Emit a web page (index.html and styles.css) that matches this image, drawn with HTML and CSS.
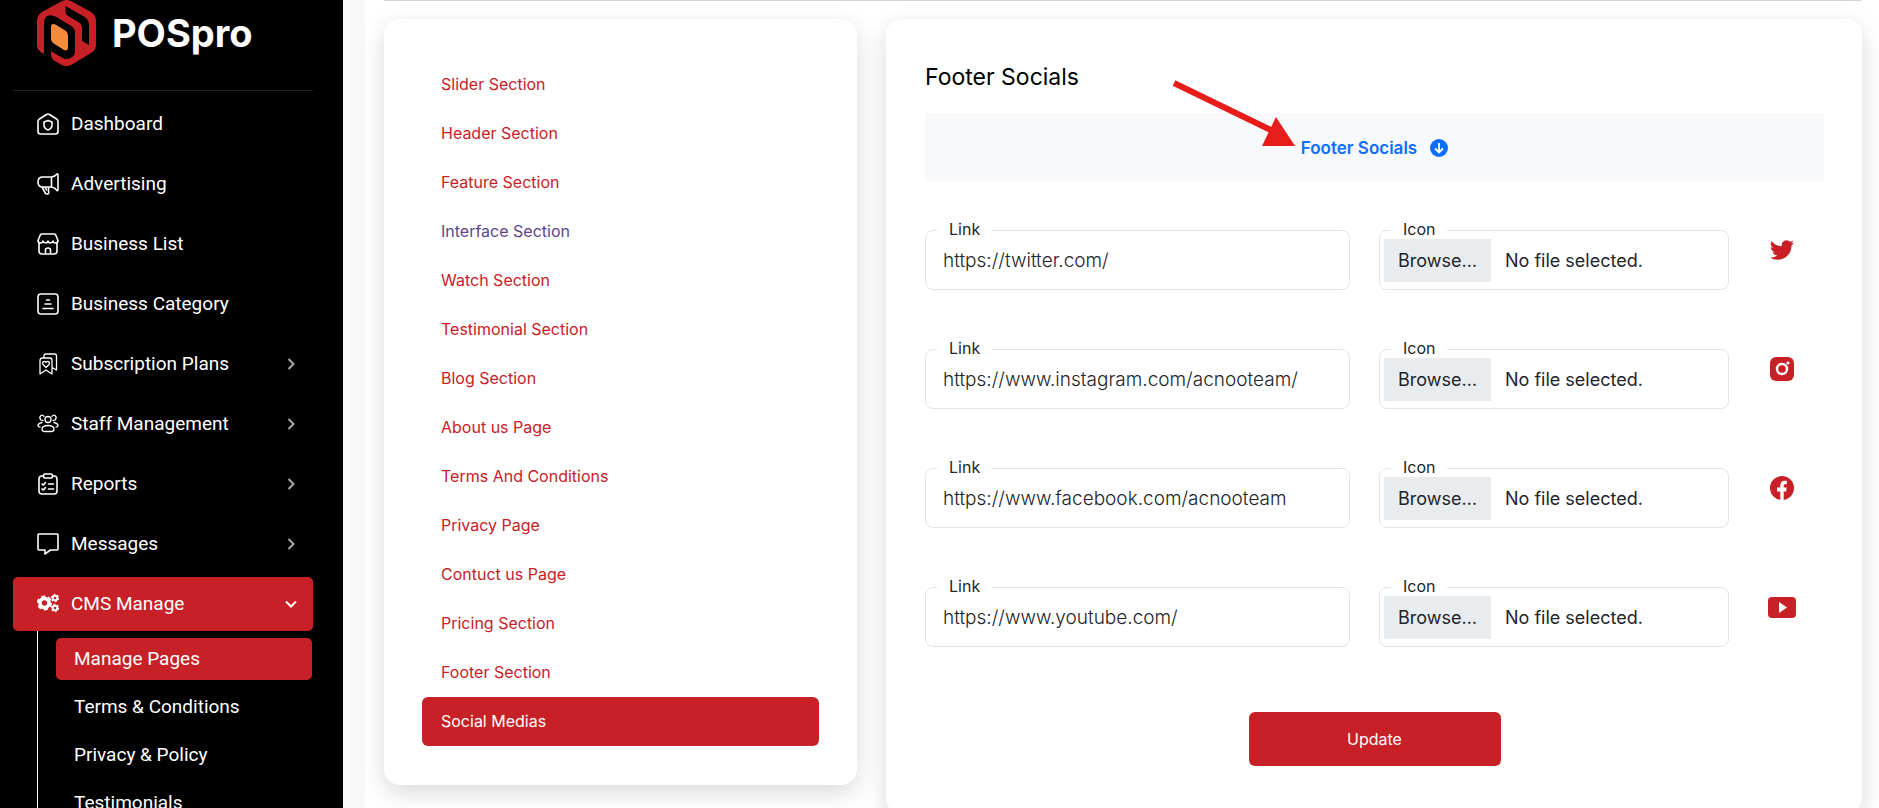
FILE: index.html
```html
<!DOCTYPE html>
<html lang="en">
<head>
<meta charset="utf-8">
<title>POSpro - Manage Pages</title>
<link rel="stylesheet" href="styles.css">
</head>
<body>
<div class="app">
  <aside class="sidebar">
    <a class="brand" href="#">
      <svg class="brand-mark" viewBox="0 0 59 66" aria-hidden="true">
        <path fill="#c72127" d="M25 1Q29.500-1 34 1L54 12Q59 15 59 21V45Q59 50 54 53L35 64.500Q29.500 67.500 24 64.500L17 60.500Q14 58 14 55V51L25 57.500Q30 60.500 35 57Q38 55 38 50V33Q38 28.500 34 26L19 17Q14.500 14.500 10.500 16Q7 18 7 24V54Q0 51 0 45V21Q0 15 5 12Z"/>
        <path fill="#000" d="M7 54V24Q7 18 10.500 16Q14.500 14.500 19 17L34 26Q38 28.500 38 33V50Q38 55 35 57Q30 60.500 25 57.500L14 51V56Z"/>
        <path fill="#000" d="M28.500 6L47 16.500Q52 19.500 52 25V45L45 41V28Q45 24 41.500 22L32 16.500Q28.500 14.500 28.500 11Z"/>
        <path fill="#f68b3c" d="M14 27Q14 22.500 18.500 24.500L29 31Q31 33 31 35.500V47Q31 51.500 27 50L16 43Q14 41.500 14 39Z"/>
      </svg>
      <span class="brand-name">POSpro</span>
    </a>
    <nav class="menu">
      <a class="menu-item" href="#">
        <svg class="menu-icon" viewBox="0 0 22 22"><path d="M1 8.500Q1 7 2.500 6L9.500 1.500Q11 .500 12.500 1.500L19.500 6Q21 7 21 8.500V18.500Q21 21 18.500 21H3.500Q1 21 1 18.500Z"/><path d="M11 7.500L15 9V12Q15 15.500 11 17Q7 15.500 7 12V9Z"/></svg>
        <span class="menu-text">Dashboard</span></a>
      <a class="menu-item" href="#">
        <svg class="menu-icon" viewBox="0 0 22 22"><path d="M14.500 4H5Q1 4.500 1 9T5 14H14.500ZM14.500 4Q18 3.500 20 1Q21 .500 21 2V16.500Q21 18 20 17.500Q18 14.500 14.500 14M5 14L8.500 20.500Q9.500 21.500 11.500 20.500Q12 20 11.500 18.500V14M8 14L9.500 17"/></svg>
        <span class="menu-text">Advertising</span></a>
      <a class="menu-item" href="#">
        <svg class="menu-icon" viewBox="0 0 22 22"><path d="M2 10V18Q2 21 5 21H17Q20 21 20 18V10M3.500 1.500Q4 1 5 1H17Q18 1 18.500 1.500L21 7.500Q21 10 18.500 10Q16 10 16 8Q15 10 13.500 10Q11.500 10 11 8Q10.500 10 8.500 10Q7 10 6 8Q6 10 3.500 10Q1 10 1 7.500ZM8.500 21V17Q8.500 15 11 15T13.500 17V21"/></svg>
        <span class="menu-text">Business List</span></a>
      <a class="menu-item" href="#">
        <svg class="menu-icon" viewBox="0 0 22 22"><rect x="1" y="1" width="20" height="20" rx="3"/><path d="M9.500 7H12.500M8 11H14M6 15.500H16"/></svg>
        <span class="menu-text">Business Category</span></a>
      <a class="menu-item" href="#">
        <svg class="menu-icon thin" viewBox="0 0 22 22"><path d="M3 21V8Q3 5 5.500 5H13Q15 5 15 7.500V21L9 17ZM7 5V3Q7 1 9 1H17.500Q19.500 1 19.500 3V17L15 14.500M9 14.500L6 11.500Q5 9.500 6.500 8.500Q8 8 9 9.500Q10 8 11.500 8.500Q13 9.500 12 11.500Z"/></svg>
        <span class="menu-text">Subscription Plans</span>
        <svg class="chevron" viewBox="0 0 12 12"><path d="M3.500 1L8.500 6L3.500 11"/></svg></a>
      <a class="menu-item" href="#">
        <svg class="menu-icon thin" viewBox="0 0 22 22"><circle cx="11" cy="6.500" r="3"/><path d="M8 18.500Q5 18.500 5 16.500Q5 12.500 11 12.500T17 16.500Q17 18.500 14 18.500ZM7 3.500Q6 1.500 4 2.500Q2 4 3.500 6.500Q4 7.500 6 7.500M15 3.500Q16 1.500 18 2.500Q20 4 18.500 6.500Q18 7.500 16 7.500M5 9.500Q1 10.500 1 12.500Q1 14 3 14M17 9.500Q21 10.500 21 12.500Q21 14 19 14"/></svg>
        <span class="menu-text">Staff Management</span>
        <svg class="chevron" viewBox="0 0 12 12"><path d="M3.500 1L8.500 6L3.500 11"/></svg></a>
      <a class="menu-item" href="#">
        <svg class="menu-icon" viewBox="0 0 22 22"><path d="M6 3H5Q2 3 2 6V18Q2 21 5 21H17Q20 21 20 18V6Q20 3 17 3H16"/><rect x="6.500" y="1" width="9" height="4" rx="1.500"/><path d="M5 11L6.500 12L8.500 9.500M5 16L6.500 17L8.500 14.500M11.500 11H16.500M11.500 16H16.500"/></svg>
        <span class="menu-text">Reports</span>
        <svg class="chevron" viewBox="0 0 12 12"><path d="M3.500 1L8.500 6L3.500 11"/></svg></a>
      <a class="menu-item" href="#">
        <svg class="menu-icon" viewBox="0 0 22 22"><path d="M2 1H20Q21 1 21 2V16Q21 17 20 17H13.500L8 21V17H2Q1 17 1 16V2Q1 1 2 1Z"/></svg>
        <span class="menu-text">Messages</span>
        <svg class="chevron" viewBox="0 0 12 12"><path d="M3.500 1L8.500 6L3.500 11"/></svg></a>
      <a class="menu-item active" href="#">
        <svg class="menu-icon gears" viewBox="0 0 22 22"><circle cx="7.500" cy="10" r="4.500" stroke-width="3.600"/><circle cx="7.500" cy="10" r="6.600" stroke-width="2" stroke-dasharray="4 2.910"/><circle cx="18" cy="5" r="2.300" stroke-width="2"/><circle cx="18" cy="5" r="3.500" stroke-width="1.400" stroke-dasharray="1.800 1.865"/><circle cx="18" cy="15" r="2.300" stroke-width="2"/><circle cx="18" cy="15" r="3.500" stroke-width="1.400" stroke-dasharray="1.800 1.865"/></svg>
        <span class="menu-text">CMS Manage</span>
        <svg class="chevron" viewBox="0 0 12 12"><path d="M1 3.500L6 8.500L11 3.500"/></svg></a>
      <div class="submenu">
        <a class="sub-item current" href="#">Manage Pages</a>
        <a class="sub-item" href="#">Terms &amp; Conditions</a>
        <a class="sub-item" href="#">Privacy &amp; Policy</a>
        <a class="sub-item" href="#">Testimonials</a>
      </div>
    </nav>
  </aside>

  <main class="content">
    <div class="columns">
      <nav class="card sections">
        <a class="section-link" href="#">Slider Section</a>
        <a class="section-link" href="#">Header Section</a>
        <a class="section-link" href="#">Feature Section</a>
        <a class="section-link visited" href="#">Interface Section</a>
        <a class="section-link" href="#">Watch Section</a>
        <a class="section-link" href="#">Testimonial Section</a>
        <a class="section-link" href="#">Blog Section</a>
        <a class="section-link" href="#">About us Page</a>
        <a class="section-link" href="#">Terms And Conditions</a>
        <a class="section-link" href="#">Privacy Page</a>
        <a class="section-link" href="#">Contuct us Page</a>
        <a class="section-link" href="#">Pricing Section</a>
        <a class="section-link" href="#">Footer Section</a>
        <a class="section-link selected" href="#">Social Medias</a>
      </nav>

      <form class="card socials">
        <h1 class="title">Footer Socials</h1>
        <div class="band">
          <a class="band-link" href="#">Footer Socials
            <svg class="pointer" viewBox="0 0 124 68" aria-hidden="true"><path d="M2 4L105 54" stroke="#e71d1c" stroke-width="6"/><path d="M104 38L123 67L90 67Z" fill="#e71d1c"/></svg>
            <svg class="band-icon" viewBox="0 0 18 18" aria-hidden="true"><circle cx="9" cy="9" r="9" fill="#0d6efd"/><path d="M9 4V13M5 9.500L9 13.500L13 9.500" fill="none" stroke="#fff" stroke-width="1.800"/></svg>
          </a>
        </div>

        <div class="rows">
          <div class="row">
            <div class="field"><label class="field-label" for="link1">Link</label><input class="field-input" id="link1" type="text" value="https://twitter.com/"></div>
            <div class="field"><label class="field-label" for="icon1">Icon</label><div class="file"><input class="file-input" id="icon1" type="file"><span class="browse">Browse…</span><span class="file-name">No file selected.</span></div></div>
            <span class="social"><svg class="social-icon" viewBox="0 0 24 24"><path d="M23.950 4.570a10 10 0 0 1-2.820.770 4.960 4.960 0 0 0 2.160-2.720c-.950.550-2 .950-3.130 1.180a4.920 4.920 0 0 0-8.380 4.480C7.690 8.090 4.070 6.130 1.640 3.160a4.920 4.920 0 0 0 1.520 6.570 4.900 4.900 0 0 1-2.230-.610v.060a4.920 4.920 0 0 0 3.950 4.830 5 5 0 0 1-2.210.080 4.940 4.940 0 0 0 4.600 3.420A9.870 9.870 0 0 1 0 19.540a13.990 13.990 0 0 0 7.550 2.210c9.050 0 14-7.500 14-13.980v-.630a9.940 9.940 0 0 0 2.400-2.570z"/></svg></span>
          </div>
          <div class="row">
            <div class="field"><label class="field-label" for="link2">Link</label><input class="field-input" id="link2" type="text" value="https://www.instagram.com/acnooteam/"></div>
            <div class="field"><label class="field-label" for="icon2">Icon</label><div class="file"><input class="file-input" id="icon2" type="file"><span class="browse">Browse…</span><span class="file-name">No file selected.</span></div></div>
            <span class="social"><svg class="social-icon" viewBox="0 0 24 24"><rect width="24" height="24" rx="6"/><circle cx="12" cy="12" r="5" fill="none" stroke="#fff" stroke-width="2.400"/><circle cx="18" cy="6" r="1.600" fill="#fff"/></svg></span>
          </div>
          <div class="row">
            <div class="field"><label class="field-label" for="link3">Link</label><input class="field-input" id="link3" type="text" value="https://www.facebook.com/acnooteam"></div>
            <div class="field"><label class="field-label" for="icon3">Icon</label><div class="file"><input class="file-input" id="icon3" type="file"><span class="browse">Browse…</span><span class="file-name">No file selected.</span></div></div>
            <span class="social"><svg class="social-icon" viewBox="0 0 24 24"><circle cx="12" cy="12" r="12"/><path fill="#fff" d="M10.300 24V15.500H7V11.500H10.300V9.500C10.300 6.500 12 4.700 14.600 4.700H16.800V8.300H15.300C14 8.300 13.700 8.800 13.700 9.800V11.500H16.700L16.100 15.500H13.700V24Z"/></svg></span>
          </div>
          <div class="row">
            <div class="field"><label class="field-label" for="link4">Link</label><input class="field-input" id="link4" type="text" value="https://www.youtube.com/"></div>
            <div class="field"><label class="field-label" for="icon4">Icon</label><div class="file"><input class="file-input" id="icon4" type="file"><span class="browse">Browse…</span><span class="file-name">No file selected.</span></div></div>
            <span class="social"><svg class="social-icon wide" viewBox="0 0 28 21"><rect width="28" height="21" rx="4"/><path fill="#fff" d="M11 5L19 10.500L11 16Z"/></svg></span>
          </div>
        </div>
        <button class="update" type="submit">Update</button>
      </form>
    </div>
  </main>
</div>
</body>
</html>
```
FILE: styles.css
```css
* { box-sizing: border-box; }

body {
  margin: 0;
  height: 100vh;
  overflow: hidden;
  background: #f8f8f8;
  font-family: Inter, "Liberation Sans", sans-serif;
}

a { text-decoration: none; }

.app { display: flex; gap: 22px; min-height: 100vh; }

/* Sidebar */
.sidebar {
  flex: 0 0 343px;
  height: 100vh;
  overflow: hidden;
  padding: 0 30px 0 13px;
  background: #000;
  font-family: Roboto, "Liberation Sans", sans-serif;
}

.brand {
  display: flex;
  align-items: center;
  gap: 16px;
  height: 91px;
  padding: 0 24px 25px;
  border-bottom: 1px solid #222;
}

.brand-mark { width: 59px; height: 66px; flex: none; }

.brand-name {
  color: #fff;
  font: 700 38px/48px Inter, "Liberation Sans", sans-serif;
}

.menu { display: flex; flex-direction: column; gap: 6px; padding-top: 6px; }

.menu-item {
  display: flex;
  align-items: center;
  gap: 12px;
  height: 54px;
  padding: 0 16px 0 24px;
  border-radius: 5px;
  color: #fff;
  font-size: 19px;
  line-height: 24px;
}

.menu-icon {
  width: 22px;
  height: 22px;
  flex: none;
  fill: none;
  stroke: #fff;
  stroke-width: 1.6;
  stroke-linejoin: round;
  stroke-linecap: round;
}
.thin { stroke-width: 1.3; }
.gears { stroke-linecap: butt; }

.menu-text { flex: 1; }

.chevron { width: 12px; height: 12px; fill: none; stroke: #aaa; stroke-width: 2; }

.active, .current, .section-link.selected { background: #c72127; }
.active .chevron { stroke: #fff; }

.submenu {
  display: flex;
  flex-direction: column;
  gap: 6px;
  margin: -6px 1px 0 24px;
  padding: 7px 0 0 18px;
  border-left: 1px solid #fff;
}

.sub-item {
  height: 42px;
  padding: 0 18px;
  border-radius: 5px;
  color: #fff;
  font-size: 19px;
  line-height: 42px;
}

/* Content */
.content { flex: 1; padding: 0 17px 0 19px; background: #fff; }

.columns {
  display: grid;
  grid-template-columns: 473fr 976fr;
  gap: 29px;
  align-items: start;
  padding-top: 18px;
  border-top: 1px solid #d5d5d5;
}

.card {
  background: #fff;
  border-radius: 16px;
  box-shadow: 0 8px 24px rgba(0, 0, 0, 0.15);
}

.sections { display: flex; flex-direction: column; padding: 41px 38px 39px; }

.section-link {
  padding: 0 19px;
  border-radius: 6px;
  color: #c72127;
  font-size: 16px;
  line-height: 49px;
}
.section-link.visited { color: #5b468c; }
.section-link.selected { color: #fff; }

.socials { padding: 39px 38px 48px 39px; }

.title { margin: 0; font-size: 23px; font-weight: 400; line-height: 38px; color: #000; }

.band {
  display: flex;
  justify-content: center;
  align-items: center;
  height: 68px;
  margin-top: 17px;
  padding-top: 2px;
  background: #f8f9fb;
}

.band-link {
  position: relative;
  display: flex;
  align-items: center;
  gap: 13px;
  color: #0d6efd;
  font-size: 17px;
  font-weight: 600;
}
.band-icon { width: 18px; height: 18px; }
.pointer { position: absolute; right: 100%; bottom: 11px; width: 124px; height: 68px; margin-right: 5px; }

.rows { display: grid; gap: 59px; margin-top: 49px; }

.row {
  display: grid;
  grid-template-columns: 425fr 350fr 66px;
  column-gap: 29px;
}

.field { position: relative; }

.field-label {
  position: absolute;
  z-index: 1;
  top: -11px;
  left: 12px;
  padding: 0 12px;
  background: #fff;
  color: #212529;
  font-size: 16px;
  line-height: 20px;
}

.field-input, .file {
  width: 100%;
  height: 60px;
  border: 1px solid #e4e4e4;
  border-radius: 8px;
  background: #fff;
  color: #212529;
  font-family: inherit;
}
.field-input { display: block; padding: 0 17px; font-size: 19px; font-weight: 300; }

.file { position: relative; display: flex; align-items: center; gap: 14px; padding: 0 4px; font-size: 18px; }
.file-input { position: absolute; inset: 0; width: 100%; opacity: 0; }
.browse { flex: none; padding: 0 14px; background: #e9ecef; line-height: 43px; }
.file-name { white-space: nowrap; }

.social {
  display: flex;
  align-items: center;
  justify-content: center;
  width: 48px;
  height: 40px;
}
.social-icon { width: 24px; height: 24px; fill: #c72127; }
.social-icon.wide { width: 28px; height: 21px; }

.update {
  display: block;
  width: 252px;
  height: 54px;
  margin: 65px auto 0;
  border: 0;
  border-radius: 6px;
  background: #c72127;
  color: #fff;
  font: 400 16px/24px Inter, "Liberation Sans", sans-serif;
}
```
